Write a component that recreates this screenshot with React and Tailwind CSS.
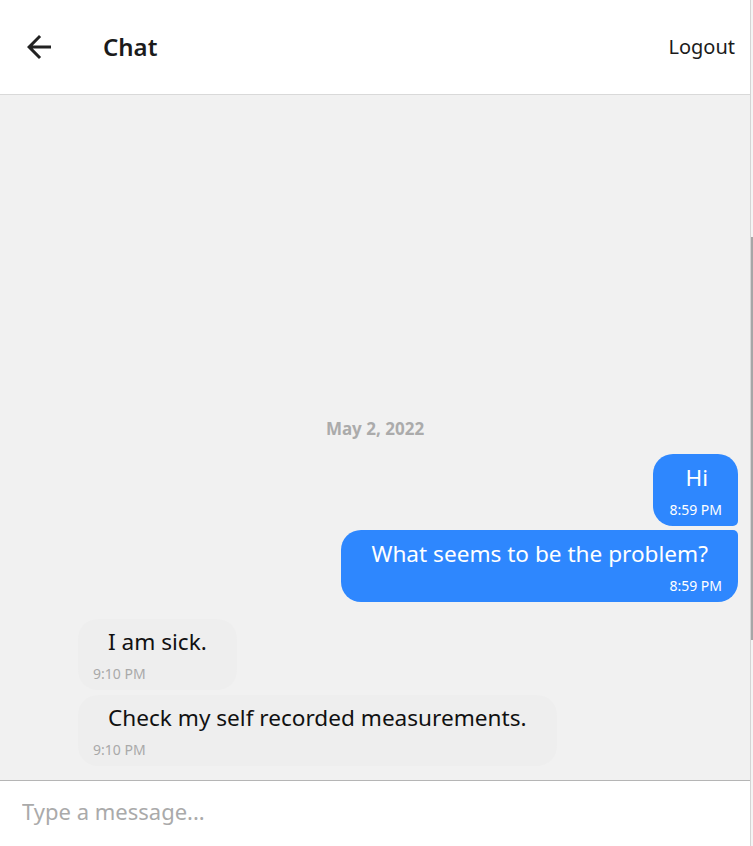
import React from 'react'
import { MdArrowBack } from 'react-icons/md'

const messages = [
  { id: 1, text: 'Hi', time: '8:59 PM', mine: true, corner: 'rounded-[20px] rounded-br-[5px]' },
  { id: 2, text: 'What seems to be the problem?', time: '8:59 PM', mine: true, corner: 'rounded-[20px] rounded-tr-[5px]' },
  { id: 3, text: 'I am sick.', time: '9:10 PM', mine: false, corner: 'rounded-[20px]' },
  { id: 4, text: 'Check my self recorded measurements.', time: '9:10 PM', mine: false, corner: 'rounded-[20px]' },
]

const Bubble = ({ msg }) => {
  if (msg.mine) {
    return (
      <div className="flex justify-end pr-[12px]">
        <div className={`bg-[#2e87fe] text-white pt-[9px] pb-[6px] ${msg.corner}`}>
          <div className="px-[30px] text-[22.6px] leading-[30px] text-right">{msg.text}</div>
          <div className="mt-[7px] pr-[16px] pl-[16px] text-[14px] leading-[20px] text-right">{msg.time}</div>
        </div>
      </div>
    )
  }
  return (
    <div className="flex justify-start pl-[78px]">
      <div className={`bg-[#eeeeee] text-[#111] pt-[8px] pb-[6px] ${msg.corner}`}>
        <div className="px-[30px] text-[22.6px] leading-[30px]">{msg.text}</div>
        <div className="mt-[7px] pl-[15px] text-[14px] leading-[20px] text-[#a9a9a9]">{msg.time}</div>
      </div>
    </div>
  )
}

const App = () => {
  return (
    <div className="flex w-[753px] h-[846px] bg-white font-['Noto_Sans',sans-serif]">
      <div className="flex flex-col w-[750px] h-full">
        {/* Header */}
        <div className="flex items-center h-[95px] shrink-0 bg-white border-b border-[#d9d9d9]">
          <button className="ml-[21px] text-[#222]">
            <MdArrowBack size={36} />
          </button>
          <h1 className="ml-[46px] text-[24px] font-semibold text-[#1b1b1b]">Chat</h1>
          <button className="ml-auto mr-[15px] text-[20px] text-[#1b1b1b]">Logout</button>
        </div>

        {/* Messages */}
        <div className="flex-1 flex flex-col justify-end bg-[#f1f1f1] pb-[14px]">
          <div className="text-center text-[17px] leading-[22px] font-bold text-[#ababab] mb-[14px]">
            May 2, 2022
          </div>
          <div className="flex flex-col gap-[4px]">
            <Bubble msg={messages[0]} />
            <Bubble msg={messages[1]} />
          </div>
          <div className="flex flex-col gap-[5px] mt-[17px]">
            <Bubble msg={messages[2]} />
            <Bubble msg={messages[3]} />
          </div>
        </div>

        {/* Input */}
        <div className="h-[66px] shrink-0 border-t border-[#b5b5b5] bg-white flex items-center pb-[5px]">
          <input
            className="w-full h-full px-[22px] text-[22px] outline-none placeholder:text-[#aaaaaa] bg-transparent"
            placeholder="Type a message..."
          />
        </div>
      </div>

      {/* Scroll track */}
      <div className="w-[3px] h-full border-l border-[#d4d4d4] bg-[#f4f4f4] flex flex-col">
        <div className="mt-[237px] h-[403px] bg-[#a6a6a6]" />
      </div>
    </div>
  )
}

export default App
